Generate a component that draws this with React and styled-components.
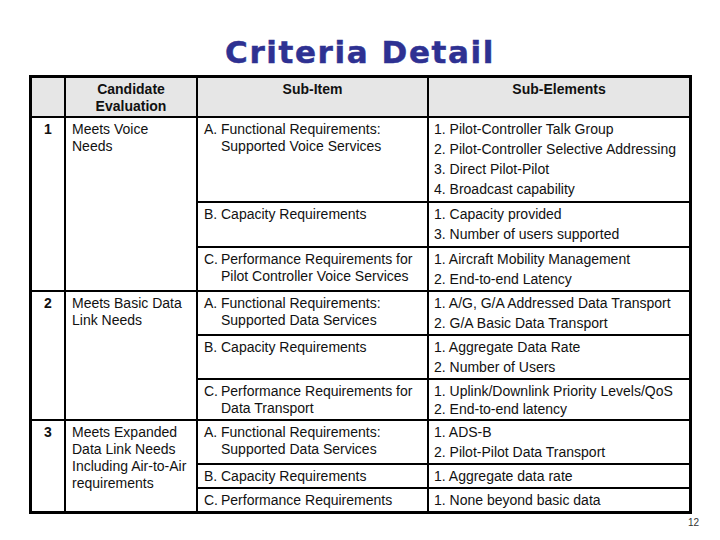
import React from "react";
import styled, { createGlobalStyle } from "styled-components";

const GlobalStyle = createGlobalStyle`
  html, body {
    margin: 0;
    padding: 0;
    background: #fff;
  }
`;

const Page = styled.div`
  width: 720px;
  height: 540px;
  box-sizing: border-box;
  padding-top: 37px;
  display: flex;
  flex-direction: column;
  font-family: "Liberation Sans", Arial, sans-serif;
  color: #111;
`;

const Title = styled.h1`
  margin: 0;
  height: 31px;
  text-align: center;
  font-family: "DejaVu Sans", "Liberation Sans", sans-serif;
  font-weight: 700;
  font-size: 31px;
  line-height: 31px;
  letter-spacing: 1.6px;
  color: #2e3192;
  -webkit-text-stroke: 0.5px #2e3192;
`;

const Table = styled.div`
  display: grid;
  grid-template-columns: 32px 130px 229px 260px;
  grid-template-rows: 38px 83px 43px 42px 42px 42px 39px 42px 22px 22px;
  gap: 2px;
  padding: 3px;
  background: #000;
  width: max-content;
  margin: 7px 0 0 29px;
`;

const Cell = styled.div`
  grid-row: span ${(p) => p.$span || 1};
  background: ${(p) => (p.$head ? "#e6e6e6" : "#fff")};
  padding: 3px 4px 0 ${(p) => (p.$center ? 0 : 6)}px;
  padding-right: ${(p) => (p.$center ? 0 : 4)}px;
  text-align: ${(p) => (p.$center ? "center" : "left")};
  font-weight: ${(p) => (p.$bold ? 700 : 400)};
  font-size: 14px;
  line-height: 17px;
  overflow: hidden;
`;

const Item = styled.div`
  display: flex;
`;

const Mark = styled.span`
  flex: 0 0 17px;
`;

const Elements = styled.div`
  display: flex;
  flex-direction: column;
  gap: ${(p) => p.$gap}px;
  padding-left: 5px;
  padding-top: 3px;
  background: #fff;
  font-size: 14px;
  line-height: 17px;
`;

const Footer = styled.div`
  margin-top: 3px;
  padding-right: 21px;
  text-align: right;
  font-size: 10px;
  line-height: 12px;
  color: #333;
`;

const groups = [
  {
    n: "1",
    need: ["Meets Voice", "Needs"],
    items: [
      {
        mark: "A.",
        lines: ["Functional Requirements:", "Supported Voice Services"],
        elems: [
          "1. Pilot-Controller Talk Group",
          "2. Pilot-Controller Selective Addressing",
          "3. Direct Pilot-Pilot",
          "4. Broadcast capability",
        ],
      },
      {
        mark: "B.",
        lines: ["Capacity Requirements"],
        elems: ["1. Capacity provided", "3. Number of users supported"],
      },
      {
        mark: "C.",
        lines: ["Performance Requirements for", "Pilot Controller Voice Services"],
        elems: ["1. Aircraft Mobility Management", "2. End-to-end Latency"],
      },
    ],
  },
  {
    n: "2",
    need: ["Meets Basic Data", "Link Needs"],
    items: [
      {
        mark: "A.",
        lines: ["Functional Requirements:", "Supported Data Services"],
        elems: ["1. A/G, G/A Addressed Data Transport", "2. G/A Basic Data Transport"],
      },
      {
        mark: "B.",
        lines: ["Capacity Requirements"],
        elems: ["1. Aggregate Data Rate", "2. Number of Users"],
      },
      {
        mark: "C.",
        lines: ["Performance Requirements for", "Data Transport"],
        elems: ["1. Uplink/Downlink Priority Levels/QoS", "2. End-to-end latency"],
        gap: 1,
      },
    ],
  },
  {
    n: "3",
    need: ["Meets Expanded", "Data Link Needs", "Including Air-to-Air", "requirements"],
    items: [
      {
        mark: "A.",
        lines: ["Functional Requirements:", "Supported Data Services"],
        elems: ["1. ADS-B", "2. Pilot-Pilot Data Transport"],
      },
      {
        mark: "B.",
        lines: ["Capacity Requirements"],
        elems: ["1. Aggregate data rate"],
      },
      {
        mark: "C.",
        lines: ["Performance Requirements"],
        elems: ["1. None beyond basic data"],
      },
    ],
  },
];

const Lines = ({ lines }) =>
  lines.map((l, i) => (
    <React.Fragment key={i}>
      {i > 0 && <br />}
      {l}
    </React.Fragment>
  ));

export default function App() {
  return (
    <>
      <GlobalStyle />
      <Page>
        <Title>Criteria Detail</Title>
        <Table>
          <Cell $head />
          <Cell $head $bold $center>
            Candidate
            <br />
            Evaluation
          </Cell>
          <Cell $head $bold $center>Sub-Item</Cell>
          <Cell $head $bold $center>Sub-Elements</Cell>

          {groups.map((g) => (
            <React.Fragment key={g.n}>
              <Cell $span={g.items.length} $bold $center>
                {g.n}
              </Cell>
              <Cell $span={g.items.length}>
                <Lines lines={g.need} />
              </Cell>
              {g.items.map((it) => (
                <React.Fragment key={it.mark}>
                  <Cell>
                    <Item>
                      <Mark>{it.mark}</Mark>
                      <span>
                        <Lines lines={it.lines} />
                      </span>
                    </Item>
                  </Cell>
                  <Elements $gap={it.gap ?? 3}>
                    {it.elems.map((e) => (
                      <span key={e}>{e}</span>
                    ))}
                  </Elements>
                </React.Fragment>
              ))}
            </React.Fragment>
          ))}
        </Table>
        <Footer>12</Footer>
      </Page>
    </>
  );
}
